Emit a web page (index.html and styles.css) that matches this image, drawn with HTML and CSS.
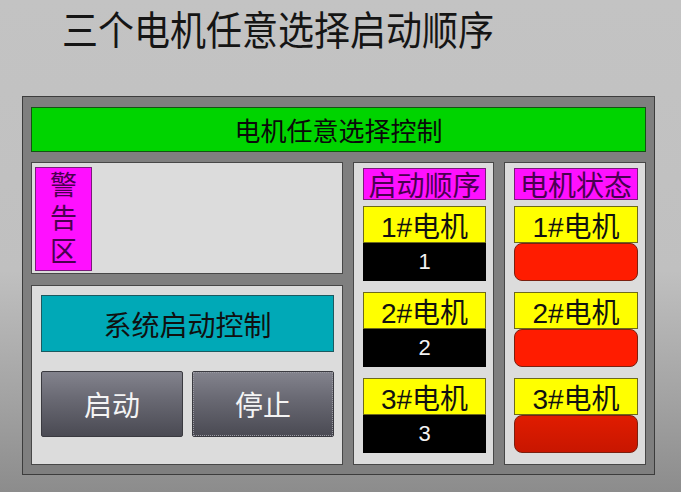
FILE: index.html
```html
<!DOCTYPE html>
<html lang="zh-CN">
<head>
  <meta charset="UTF-8">
  <meta name="viewport" content="width=device-width, initial-scale=1.0">
  <title>三个电机任意选择启动顺序</title>
  <link rel="stylesheet" href="styles.css">
</head>
<body>
  <h1 class="titulo"><span>三个电机任意选择启动顺序</span></h1>

  <div class="tablero">
    <div class="banner">电机任意选择控制</div>

    <div class="cuerpo">
      <div class="col-izq">
        <div class="caja aviso">
          <div class="aviso-etiqueta">
            <span>警</span>
            <span>告</span>
            <span>区</span>
          </div>
        </div>
        <div class="caja control">
          <div class="control-titulo">系统启动控制</div>
          <div class="botones">
            <button class="btn">启动</button>
            <button class="btn btn-foco">停止</button>
          </div>
        </div>
      </div>

      <div class="caja columna">
        <div class="cabecera">启动顺序</div>
        <div class="motor">
          <div class="nombre">1#电机</div>
          <div class="orden">1</div>
        </div>
        <div class="motor">
          <div class="nombre">2#电机</div>
          <div class="orden">2</div>
        </div>
        <div class="motor">
          <div class="nombre">3#电机</div>
          <div class="orden">3</div>
        </div>
      </div>

      <div class="caja columna">
        <div class="cabecera">电机状态</div>
        <div class="motor">
          <div class="nombre">1#电机</div>
          <div class="estado"></div>
        </div>
        <div class="motor">
          <div class="nombre">2#电机</div>
          <div class="estado"></div>
        </div>
        <div class="motor">
          <div class="nombre">3#电机</div>
          <div class="estado oscuro"></div>
        </div>
      </div>
    </div>
  </div>
</body>
</html>
```

FILE: styles.css
```css
body {
  margin: 0;
  width: 681px;
  height: 492px;
  overflow: hidden;
  font-family: "Liberation Sans", "Noto Sans CJK SC", sans-serif;
  background: linear-gradient(to bottom, #c3c3c3 0%, #c0c0c0 55%, #a4a4a4 80%, #8c8c8c 100%);
}
.titulo {
  margin: 0;
  padding: 9px 0 0 62px;
  height: 96px;
  box-sizing: border-box;
  font-size: 40px;
  line-height: 44px;
  font-weight: normal;
  color: #151515;
  white-space: nowrap;
}
.titulo span {
  display: inline-block;
  transform: scaleX(0.9);
  transform-origin: left top;
}
.tablero {
  margin-left: 22px;
  width: 633px;
  height: 379px;
  box-sizing: border-box;
  border: 1px solid #3c3c3c;
  background-color: #7f7f7f;
  padding: 10px 8px 9px 8px;
  display: flex;
  flex-direction: column;
  gap: 10px;
}
.banner {
  height: 46px;
  box-sizing: border-box;
  background-color: #00d400;
  border: 1px solid #145214;
  display: flex;
  align-items: center;
  justify-content: center;
  font-size: 26px;
  color: #0a0a0a;
}
.cuerpo {
  flex: 1;
  display: grid;
  grid-template-columns: 312px 141px 142px;
  gap: 10px;
}
.col-izq {
  display: flex;
  flex-direction: column;
  gap: 11px;
}
.caja {
  background-color: #dcdcdc;
  border: 1px solid #474747;
  box-sizing: border-box;
}
.aviso {
  height: 112px;
  padding: 4px 3px;
}
.aviso-etiqueta {
  width: 57px;
  height: 104px;
  box-sizing: border-box;
  padding: 2px 0;
  background-color: #ff10ff;
  border: 1px solid #7a1a7a;
  display: flex;
  flex-direction: column;
  justify-content: space-between;
  align-items: center;
  font-size: 27px;
  line-height: 32px;
  color: #4a0050;
}
.control {
  flex: 1;
  padding: 9px 8px 0 9px;
}
.control-titulo {
  height: 57px;
  box-sizing: border-box;
  background-color: #00a9b7;
  border: 1px solid #1c5a60;
  display: flex;
  align-items: center;
  justify-content: center;
  font-size: 28px;
  color: #101010;
}
.botones {
  margin-top: 19px;
  display: grid;
  grid-template-columns: 142px 142px;
  gap: 9px;
}
.btn {
  height: 66px;
  font-family: inherit;
  font-size: 28px;
  color: #f4f4f4;
  background: linear-gradient(to bottom, #83838d 0%, #6a6a74 40%, #4a4a53 100%);
  border: 1px solid #3a3a40;
  border-radius: 2px;
  cursor: pointer;
}
.btn-foco {
  outline: 1px dotted #9a9aa2;
  outline-offset: -2px;
}
.columna {
  padding: 5px 7px 0 9px;
  display: flex;
  flex-direction: column;
}
.cabecera {
  height: 32px;
  box-sizing: border-box;
  background-color: #ff10ff;
  border: 1px solid #7a1a7a;
  display: flex;
  align-items: center;
  justify-content: center;
  font-size: 28px;
  color: #4a0050;
  margin-bottom: 6px;
}
.motor {
  margin-bottom: 11px;
}
.nombre {
  height: 37px;
  box-sizing: border-box;
  background-color: #ffff00;
  border: 1px solid #6e6a1a;
  display: flex;
  align-items: center;
  justify-content: center;
  font-size: 28px;
  color: #111;
}
.orden {
  height: 38px;
  background-color: #000;
  color: #f2f2f2;
  display: flex;
  align-items: center;
  justify-content: center;
  font-size: 22px;
}
.estado {
  height: 38px;
  box-sizing: border-box;
  background-color: #ff1c00;
  border: 1px solid #7a2010;
  border-radius: 8px;
}
.estado.oscuro {
  background: linear-gradient(to bottom, #e01c00, #c81600);
}
```
